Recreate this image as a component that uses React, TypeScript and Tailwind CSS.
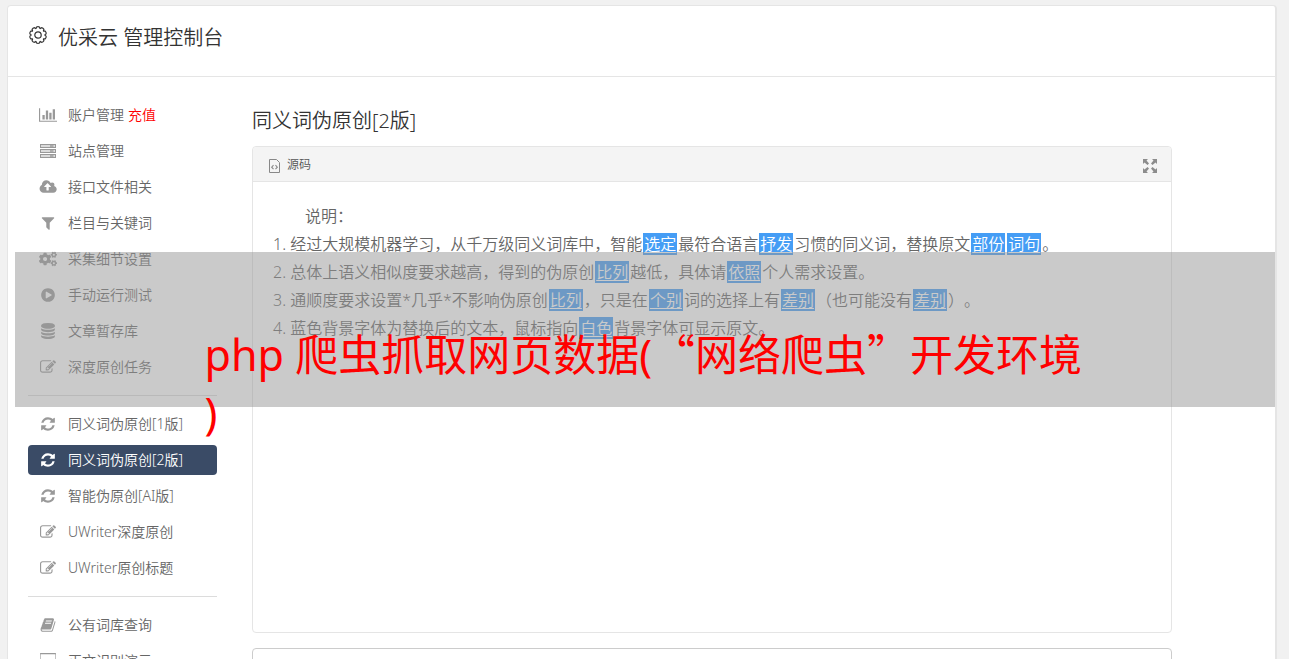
import React from 'react';
import { FaCogs } from 'react-icons/fa';

type IconName = 'chart' | 'server' | 'upload' | 'filter' | 'cogs' | 'play' | 'database' | 'edit' | 'refresh' | 'book' | 'desktop';

interface MenuItem {
    icon: IconName;
    label: string;
    extra?: string;
    active?: boolean;
}

// path data on a 1792 unit grid, wide icons use a wider box
const ICONS: Record<Exclude<IconName, 'cogs' | 'server'>, { width: number; path: string }> = {
    chart: { width: 2048, path: 'M640 896v512h-256v-512h256zm384-512v1024h-256v-1024h256zm1024 1152v128h-2048v-1536h128v1408h1920zm-640-896v768h-256v-768h256zm384-384v1152h-256v-1152h256z' },
    upload: { width: 1984, path: 'M1344 864q0-14-9-23l-352-352q-9-9-23-9t-23 9l-351 351q-10 12-10 24 0 14 9 23t23 9h224v352q0 13 9.5 22.5t22.5 9.5h192q13 0 22.5-9.5t9.5-22.5v-352h224q13 0 22.5-9.5t9.5-22.5zm640 288q0 159-112.5 271.5t-271.5 112.5h-1088q-185 0-316.5-131.5t-131.5-316.5q0-130 70-240t188-165q-2-30-2-43 0-212 150-362t362-150q156 0 285.5 87t188.5 231q71-62 166-62 106 0 181 75t75 181q0 76-41 138 130 31 213.5 135.5t83.5 238.5z' },
    filter: { width: 1792, path: 'M1595 295q17 41-14 70l-493 493v742q0 42-39 59-13 5-25 5-27 0-45-19l-256-256q-19-19-19-45v-486l-493-493q-31-29-14-70 17-39 59-39h1280q42 0 59 39z' },
    play: { width: 1792, path: 'M896 128q209 0 385.5 103t279.5 279.5 103 385.5-103 385.5-279.5 279.5-385.5 103-385.5-103-279.5-279.5-103-385.5 103-385.5 279.5-279.5 385.5-103zm384 823q32-18 32-55t-32-55l-544-320q-31-19-64-1-32 19-32 56v640q0 37 32 56 16 8 32 8 17 0 32-9z' },
    database: { width: 1792, path: 'M896 768q237 0 443-43t325-127v170q0 69-103 128t-280 93.5-385 34.5-385-34.5-280-93.5-103-128v-170q119 84 325 127t443 43zm0 768q237 0 443-43t325-127v170q0 69-103 128t-280 93.5-385 34.5-385-34.5-280-93.5-103-128v-170q119 84 325 127t443 43zm0-384q237 0 443-43t325-127v170q0 69-103 128t-280 93.5-385 34.5-385-34.5-280-93.5-103-128v-170q119 84 325 127t443 43zm0-1152q208 0 385 34.5t280 93.5 103 128v128q0 69-103 128t-280 93.5-385 34.5-385-34.5-280-93.5-103-128v-128q0-69 103-128t280-93.5 385-34.5z' },
    edit: { width: 1792, path: 'M888 1184l116-116-152-152-116 116v56h96v96h56zm440-720q-16-16-33 1l-350 350q-17 17-1 33t33-1l350-350q17-17 1-33zm80 594v190q0 119-84.5 203.5t-203.5 84.5h-832q-119 0-203.5-84.5t-84.5-203.5v-832q0-119 84.5-203.5t203.5-84.5h832q63 0 117 25 15 7 18 23 3 17-9 29l-49 49q-14 14-32 8-23-6-45-6h-832q-66 0-113 47t-47 113v832q0 66 47 113t113 47h832q66 0 113-47t47-113v-126q0-13 9-22l64-64q15-15 35-7t20 29zm-96-738l288 288-672 672h-288v-288zm444 132l-92 92-288-288 92-92q28-28 68-28t68 28l152 152q28 28 28 68t-28 68z' },
    refresh: { width: 1792, path: 'M1639 1056q0 5-1 7-64 268-268 434.5t-478 166.5q-146 0-282.5-55t-243.5-157l-129 129q-19 19-45 19t-45-19-19-45v-448q0-26 19-45t45-19h448q26 0 45 19t19 45-19 45l-137 137q71 66 161 102t187 36q134 0 250-65t186-179q11-17 53-117 8-23 30-23h192q13 0 22.5 9.5t9.5 22.5zm25-800v448q0 26-19 45t-45 19h-448q-26 0-45-19t-19-45 19-45l138-138q-148-137-349-137-134 0-250 65t-186 179q-11 17-53 117-8 23-30 23h-199q-13 0-22.5-9.5t-9.5-22.5v-7q65-268 270-434.5t480-166.5q146 0 284 55.5t245 156.5l130-129q19-19 45-19t45 19 19 45z' },
    book: { width: 1792, path: 'M1703 478q40 57 18 129l-275 906q-19 64-76.5 107.5t-122.5 43.5h-923q-77 0-148.5-53.5t-99.5-131.5q-24-67-2-127 0-4 3-27t4-37q1-8-3-21.5t-3-19.5q2-11 8-21t16.5-23.5 16.5-23.5q23-38 45-91.5t30-91.5q3-10 .5-30t-.5-28q3-11 17-28t17-23q21-36 42-92t25-90q1-9-2.5-32t.5-28q4-13 22-30.5t22-22.5q19-26 42.5-84.5t27.5-96.5q1-8-3-25.5t-2-26.5q2-8 9-18t18-23 17-21q8-12 16.5-30.5t15-35 16-36 19.5-32 26.5-23.5 36-11.5 47.5 5.5l-1 3q38-9 51-9h761q74 0 114 56t18 130l-274 906q-36 119-71.5 153.5t-128.5 34.5h-869q-27 0-38 15-11 16-1 43 24 70 144 70h923q29 0 56-15.5t35-41.5l300-987q7-22 5-57 38 15 59 43zm-1064 2q-4 13 2 22.5t20 9.5h608q13 0 25.5-9.5t16.5-22.5l21-64q4-13-2-22.5t-20-9.5h-608q-13 0-25.5 9.5t-16.5 22.5zm-83 256q-4 13 2 22.5t20 9.5h608q13 0 25.5-9.5t16.5-22.5l21-64q4-13-2-22.5t-20-9.5h-608q-13 0-25.5 9.5t-16.5 22.5z' },
    desktop: { width: 1856, path: 'M1728 992v-832q0-13-9.5-22.5t-22.5-9.5h-1600q-13 0-22.5 9.5t-9.5 22.5v832q0 13 9.5 22.5t22.5 9.5h1600q13 0 22.5-9.5t9.5-22.5zm128-832v1088q0 66-47 113t-113 47h-544q0 37 16 77.5t32 71 16 43.5q0 26-19 45t-45 19h-512q-26 0-45-19t-19-45q0-14 16-44t32-70 16-78h-544q-66 0-113-47t-47-113v-1088q0-66 47-113t113-47h1600q66 0 113 47t47 113z' },
};

const MENU: MenuItem[][] = [
    [
        { icon: 'chart', label: '账户管理', extra: '充值' },
        { icon: 'server', label: '站点管理' },
        { icon: 'upload', label: '接口文件相关' },
        { icon: 'filter', label: '栏目与关键词' },
        { icon: 'cogs', label: '采集细节设置' },
        { icon: 'play', label: '手动运行测试' },
        { icon: 'database', label: '文章暂存库' },
        { icon: 'edit', label: '深度原创任务' },
    ],
    [
        { icon: 'refresh', label: '同义词伪原创[1版]' },
        { icon: 'refresh', label: '同义词伪原创[2版]', active: true },
        { icon: 'refresh', label: '智能伪原创[AI版]' },
        { icon: 'edit', label: 'UWriter深度原创' },
        { icon: 'edit', label: 'UWriter原创标题' },
    ],
    [
        { icon: 'book', label: '公有词库查询' },
        { icon: 'desktop', label: '正文识别演示' },
    ],
];

const MenuIcon: React.FC<{ name: IconName }> = ({ name }) => {
    if (name === 'cogs') {
        return <FaCogs className="h-4 w-[18px]" />;
    }
    if (name === 'server') {
        return (
            <svg viewBox="0 0 16 16" className="h-4 w-4" fill="none" stroke="currentColor">
                {[1.5, 6.5, 11.5].map((y) => (
                    <g key={y}>
                        <rect x="0.5" y={y} width="15" height="3" fill="currentColor" fillOpacity="0.35" />
                        <path d={`M10 ${y + 1.5}h3.5`} strokeWidth="1.4" />
                    </g>
                ))}
            </svg>
        );
    }
    const { width, path } = ICONS[name];
    return (
        <svg viewBox={`0 0 ${width} 1792`} className="h-4 w-auto" fill="currentColor">
            <path d={path} />
        </svg>
    );
};

const GearIcon = () => {
    // ten rounded teeth round the rim
    const teeth = Array.from({ length: 10 }, (_, i) => {
        const at = (deg: number, r: number) => {
            const a = ((i * 36 + deg - 90) * Math.PI) / 180;
            return `${(10 + r * Math.cos(a)).toFixed(2)} ${(10 + r * Math.sin(a)).toFixed(2)}`;
        };
        return `${i === 0 ? 'M' : 'L'}${at(-17, 6.8)} L${at(-10, 8.2)} Q${at(0, 8.8)} ${at(10, 8.2)} L${at(17, 6.8)}`;
    }).join(' ');
    return (
        <svg viewBox="0 0 20 20" className="h-5 w-5" fill="none" stroke="currentColor" strokeWidth="1.2" strokeLinejoin="round">
            <path d={`${teeth}Z`} />
            <circle cx="10" cy="10" r="3.2" />
        </svg>
    );
};

const Swap: React.FC<{ children: React.ReactNode }> = ({ children }) => (
    <span className="mx-px bg-[#459df5] px-px text-white underline underline-offset-2">{children}</span>
);

const Sidebar = () => (
    <nav className="w-[189px] shrink-0">
        {MENU.map((group, i) => (
            <ul key={i} className={`space-y-1.5 ${i > 0 ? 'mt-[13px] border-t border-[#dcdcdc] pt-[13px]' : ''}`}>
                {group.map((item) => (
                    <li key={item.label}>
                        <a
                            href="#"
                            className={`flex h-[30px] items-center rounded pl-2.5 text-sm ${item.active ? 'bg-[#3a4b66] text-white' : 'text-[#666]'}`}
                        >
                            <span className={`mr-2.5 flex w-5 justify-center ${item.active ? 'text-white' : 'text-[#999]'}`}>
                                <MenuIcon name={item.icon} />
                            </span>
                            {item.label}
                            {item.extra && <span className="ml-1 text-[#f00]">{item.extra}</span>}
                        </a>
                    </li>
                ))}
            </ul>
        ))}
    </nav>
);

const Editor = () => (
    <section className="h-[487px] rounded border border-[#e5e5e5]">
        <div className="flex h-[35px] items-center justify-between rounded-t border-b border-[#e5e5e5] bg-[#f4f4f4] pt-1 pr-3.5 pl-4">
            <button type="button" className="flex items-center gap-[7px] text-xs text-[#555]">
                <svg viewBox="0 0 11 14" className="h-3.5 w-[11px]" fill="none" stroke="#888">
                    <path d="M.5 .5h7l3 3v10H.5z" />
                    <path d="M4.5 6.2 2.7 8.2l1.8 2M6.5 6.2l1.8 2-1.8 2" strokeWidth="1.1" />
                </svg>
                <span className="pb-0.5">源码</span>
            </button>
            <button type="button" aria-label="全屏" className="text-[#8c8c8c]">
                <svg viewBox="0 0 14 14" className="h-3.5 w-3.5" fill="currentColor">
                    <path d="M0 0h5L3.5 1.5 6 4.5 4.5 6 1.5 3.5 0 5zM14 0v5l-1.5-1.5L9.5 6 8 4.5l2.5-3L9 0zM0 14V9l1.5 1.5L4.5 8 6 9.500l-2.500 3L5 14zM14 14H9l1.5-1.5L8 9.5 9.5 8l3 2.5L14 9z" />
                </svg>
            </button>
        </div>
        <div className="px-5 pt-5 text-base leading-7 text-[#666]">
            <p className="pl-8">说明：</p>
            <ol className="list-inside list-decimal">
                <li>经过大规模机器学习，从千万级同义词库中，智能<Swap>选定</Swap>最符合语言<Swap>抒发</Swap>习惯的同义词，替换原文<Swap>部份</Swap><Swap>词句</Swap>。</li>
                <li>总体上语义相似度要求越高，得到的伪原创<Swap>比列</Swap>越低，具体请<Swap>依照</Swap>个人需求设置。</li>
                <li>通顺度要求设置*几乎*不影响伪原创<Swap>比列</Swap>，只是在<Swap>个别</Swap>词的选择上有<Swap>差别</Swap>（也可能没有<Swap>差别</Swap>）。</li>
                <li>蓝色背景字体为替换后的文本，鼠标指向<Swap>白色</Swap>背景字体可显示原文。</li>
            </ol>
        </div>
    </section>
);

const Banner = () => (
    <div className="absolute top-[252px] right-3.5 left-[15px] flex h-[155px] justify-center bg-[#969696]/50 pt-[71px]">
        <p className="w-[881px] shrink-0 text-[43px] leading-[58px] font-normal whitespace-nowrap text-[#f00]">
            php 爬虫抓取网页数据(
            <span className="font-['Noto_Sans_CJK_SC',sans-serif]">“网络爬虫”</span>
            开发环境
            <br />)
        </p>
    </div>
);

export default function App() {
    return (
        <div className="relative h-screen overflow-hidden bg-[#f1f1f1] pt-[5px] pr-3 pl-[7px] font-['Noto_Sans','Noto_Sans_CJK_SC',sans-serif] font-[350] [text-spacing-trim:space-all]">
            <div className="min-h-full rounded border border-r-2 border-[#e5e5e5] bg-white">
                <header className="flex h-[71px] items-start gap-2.5 border-b border-[#e5e5e5] px-5 pt-[17px] text-[#333]">
                    <span className="pt-0.5">
                        <GearIcon />
                    </span>
                    <h1 className="text-xl leading-[30px]">优采云 管理控制台</h1>
                </header>
                <div className="flex gap-[35px] pt-[23px] pr-[103px] pl-5">
                    <Sidebar />
                    <main className="min-w-0 flex-1">
                        <h2 className="mt-1.5 mb-2.5 text-xl leading-[30px] text-[#333]">同义词伪原创[2版]</h2>
                        <Editor />
                        <textarea aria-label="文本" className="mt-[15px] block h-40 w-full resize-none rounded border border-[#ccc] p-3 text-sm" />
                    </main>
                </div>
            </div>
            <Banner />
        </div>
    );
}
